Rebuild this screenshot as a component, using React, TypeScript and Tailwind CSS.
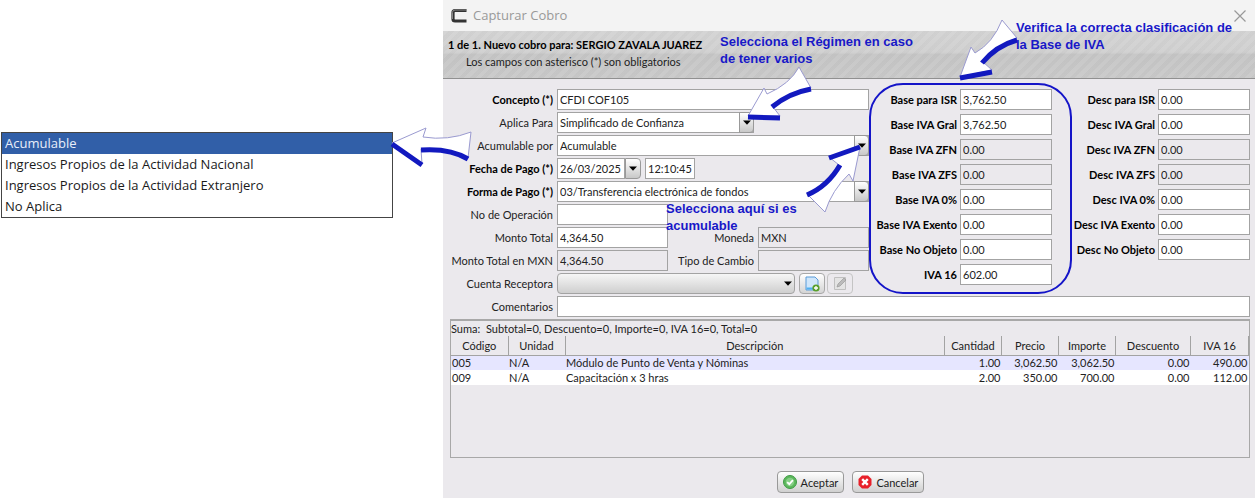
import { useState, type ReactNode } from 'react'

const OPTIONS = [
  'Acumulable',
  'Ingresos Propios de la Actividad Nacional',
  'Ingresos Propios de la Actividad Extranjero',
  'No Aplica',
]

const BASES = [
  { label: 'Base para ISR', value: '3,762.50' },
  { label: 'Base IVA Gral', value: '3,762.50' },
  { label: 'Base IVA ZFN', value: '0.00', readOnly: true },
  { label: 'Base IVA ZFS', value: '0.00', readOnly: true },
  { label: 'Base IVA 0%', value: '0.00' },
  { label: 'Base IVA Exento', value: '0.00' },
  { label: 'Base No Objeto', value: '0.00' },
  { label: 'IVA 16', value: '602.00' },
]

const DESCS = [
  { label: 'Desc para ISR', value: '0.00' },
  { label: 'Desc IVA Gral', value: '0.00' },
  { label: 'Desc IVA ZFN', value: '0.00', readOnly: true },
  { label: 'Desc IVA ZFS', value: '0.00', readOnly: true },
  { label: 'Desc IVA 0%', value: '0.00' },
  { label: 'Desc IVA Exento', value: '0.00' },
  { label: 'Desc No Objeto', value: '0.00' },
]

const COLUMNS = [
  { name: 'Código', width: 'w-[57px]' },
  { name: 'Unidad', width: 'w-[57px]' },
  { name: 'Descripción', width: '' },
  { name: 'Cantidad', width: 'w-[57px]' },
  { name: 'Precio', width: 'w-[57px]' },
  { name: 'Importe', width: 'w-[57px]' },
  { name: 'Descuento', width: 'w-[75px]' },
  { name: 'IVA 16', width: 'w-[58px]' },
]

const ROWS = [
  ['005', 'N/A', 'Módulo de Punto de Venta y Nóminas', '1.00', '3,062.50', '3,062.50', '0.00', '490.00'],
  ['009', 'N/A', 'Capacitación x 3 hras', '2.00', '350.00', '700.00', '0.00', '112.00'],
]

const field = 'h-[21px] min-w-0 border border-[#a3a3a3] px-[2px] text-[#222] outline-none'
const note = 'absolute font-["Liberation_Sans",sans-serif] text-[13px] leading-[17px] font-bold whitespace-nowrap text-[#1818c8]'

function Caret() {
  return (
    <svg viewBox="0 0 8 5" className="h-[5px] w-[8px]" aria-hidden="true">
      <path d="M0 0.5h8L4 4.8z" fill="#000" />
    </svg>
  )
}

function Row({ id, label, bold, children }: { id: string; label: string; bold?: boolean; children: ReactNode }) {
  return (
    <div className="flex items-center gap-1">
      <label htmlFor={id} className={`flex w-[103px] shrink-0 justify-end whitespace-nowrap ${bold ? 'font-bold text-black' : ''}`}>
        {label}
      </label>
      {children}
    </div>
  )
}

function Combo({ id, value, width }: { id: string; value: string; width: string }) {
  return (
    <div className={`relative ${width}`}>
      <select id={id} className={`${field} w-full appearance-none bg-white`} defaultValue={value}>
        <option>{value}</option>
      </select>
      <span className="pointer-events-none absolute inset-y-0 right-0 flex w-[15px] items-center justify-center rounded-r-sm border border-[#999] bg-linear-to-b from-white to-[#c8c8c8]">
        <Caret />
      </span>
    </div>
  )
}

function Amounts({ items, width }: { items: { label: string; value: string; readOnly?: boolean }[]; width: string }) {
  return (
    <div className="flex flex-col gap-1">
      {items.map((item) => {
        const id = item.label.toLowerCase().replace(/\W+/g, '-')
        return (
          <div key={id} className="flex items-center gap-[3px]">
            <label htmlFor={id} className={`${width} flex shrink-0 justify-end font-bold whitespace-nowrap text-black`}>
              {item.label}
            </label>
            <input
              id={id}
              defaultValue={item.value}
              readOnly={item.readOnly}
              className={`${field} w-[92px] ${item.readOnly ? 'bg-[#ebe9ed]' : 'bg-white'}`}
            />
          </div>
        )
      })}
    </div>
  )
}

function Arrow({ className, viewBox, shape, shadow }: { className: string; viewBox: string; shape: string; shadow: string }) {
  return (
    <svg viewBox={viewBox} className={`pointer-events-none absolute ${className}`} aria-hidden="true">
      <path d={shape} fill="#fff" stroke="#9a9ad0" strokeWidth="1" />
      <path d={shadow} fill="none" stroke="#1219bf" strokeWidth="5" />
    </svg>
  )
}

function OptionList() {
  const [selected, setSelected] = useState(0)
  return (
    <ul
      role="listbox"
      aria-label="Acumulable por"
      className='mt-[132px] ml-px mr-[50px] self-start border border-[#444] bg-white font-["Open_Sans",sans-serif] text-[13px]'
    >
      {OPTIONS.map((o, i) => (
        <li
          key={o}
          role="option"
          aria-selected={i === selected}
          onClick={() => setSelected(i)}
          className={`flex h-[21px] items-center px-[3px] ${i === selected ? 'bg-[#315fa8] text-[#e8eefa]' : 'text-[#1a1a1a]'}`}
        >
          {o}
        </li>
      ))}
    </ul>
  )
}

function ItemsTable() {
  return (
    <section className="mt-[2px] ml-[7px] h-[139px] border border-t-2 border-[#a8a8a8]">
      <p className="h-[15px] leading-[15px]">Suma:&nbsp; Subtotal=0, Descuento=0, Importe=0, IVA 16=0, Total=0</p>
      <table className="w-full table-fixed border-collapse">
        <thead>
          <tr>
            {COLUMNS.map((c) => (
              <th key={c.name} className={`${c.width} h-[19px] border-r border-b border-[#a3a3a3] p-0 text-center font-normal`}>
                {c.name}
              </th>
            ))}
          </tr>
        </thead>
        <tbody>
          {ROWS.map((r, i) => (
            <tr key={r[0]} className={i === 0 ? 'bg-[#e6e6ff]' : 'bg-white'}>
              {r.map((cell, j) => (
                <td key={j} className={`h-[15px] px-px py-0 leading-[14px] ${j > 2 ? 'text-right' : 'text-left'}`}>
                  {cell}
                </td>
              ))}
            </tr>
          ))}
        </tbody>
      </table>
    </section>
  )
}

export default function App() {
  return (
    <main className='grid grid-cols-[443fr_812fr] bg-white font-[Lato,sans-serif] text-[11px] leading-[15px] text-[#222]'>
      <OptionList />

      <div className="relative flex min-w-0 flex-col bg-[#ebe9ed]">
        <header className="flex h-[31px] items-center bg-[#f3f3f3] pr-[9px] pl-2">
          <svg viewBox="0 0 16 16" className="h-4 w-4" aria-hidden="true">
            <path d="M15.500 2.500H4Q2 2.500 2 4.500v6.500Q2 13 4 13H15.500" fill="none" stroke="#333" strokeWidth="3.200" />
            <path d="M15 2H4Q1.500 2 1.500 4.500v6.500" fill="none" stroke="#888" strokeWidth="1" />
          </svg>
          <h1 className='ml-[6px] flex-1 font-["Open_Sans",sans-serif] text-[13px] text-[#999]'>Capturar Cobro</h1>
          <button type="button" aria-label="Cerrar">
            <svg viewBox="0 0 12 12" className="h-3 w-3" aria-hidden="true">
              <path d="M0.500 0.500l11 11M11.500 0.500l-11 11" stroke="#999" strokeWidth="1.200" />
            </svg>
          </button>
        </header>

        <div className="h-[48px] border-b border-[#909090] bg-[repeating-linear-gradient(135deg,#ffffff12_0_4px,#00000002_4px_8px),linear-gradient(#d2d2d2,#cfcfcf_45%,#c4c4c4_50%,#c8c8c8)] pt-[5px] pl-[5px]">
          <p className="leading-[17px] font-bold text-black">1 de 1. Nuevo cobro para: SERGIO ZAVALA JUAREZ</p>
          <p className="pl-[18px] leading-[17px]">Los campos con asterisco (*) son obligatorios</p>
        </div>

        <form className="pt-[10px] pr-[5px] pb-[5px]" onSubmit={(e) => e.preventDefault()}>
          <div className="flex">
            <div className="flex min-w-0 flex-1 flex-col gap-[2px] pl-[7px]">
              <Row id="concepto" label="Concepto (*)" bold>
                <input id="concepto" defaultValue="CFDI COF105" className={`${field} flex-1 bg-white`} />
              </Row>
              <Row id="aplica" label="Aplica Para">
                <Combo id="aplica" value="Simplificado de Confianza" width="w-[197px]" />
              </Row>
              <Row id="acumulable" label="Acumulable por">
                <Combo id="acumulable" value="Acumulable" width="flex-1" />
              </Row>
              <Row id="fecha" label="Fecha de Pago (*)" bold>
                <div className="flex">
                  <input id="fecha" defaultValue="26/03/2025" className={`${field} w-[68px] bg-white`} />
                  <button type="button" aria-label="Abrir calendario" className="flex w-4 items-center justify-center rounded-r-sm border border-[#999] bg-linear-to-b from-white to-[#c8c8c8]">
                    <Caret />
                  </button>
                </div>
                <input aria-label="Hora" defaultValue="12:10:45" className={`${field} w-[50px] bg-white`} />
              </Row>
              <Row id="forma" label="Forma de Pago (*)" bold>
                <Combo id="forma" value="03/Transferencia electrónica de fondos" width="flex-1" />
              </Row>
              <Row id="operacion" label="No de Operación">
                <input id="operacion" className={`${field} w-[111px] bg-white`} />
              </Row>
              <Row id="monto" label="Monto Total">
                <input id="monto" defaultValue="4,364.50" className={`${field} w-[111px] bg-white`} />
                <label htmlFor="moneda" className="flex-1 text-right">Moneda</label>
                <input id="moneda" defaultValue="MXN" readOnly className={`${field} w-[111px] bg-[#ebe9ed]`} />
              </Row>
              <Row id="monto-mxn" label="Monto Total en MXN">
                <input id="monto-mxn" defaultValue="4,364.50" readOnly className={`${field} w-[111px] bg-[#ebe9ed]`} />
                <label htmlFor="cambio" className="flex-1 text-right">Tipo de Cambio</label>
                <input id="cambio" readOnly className={`${field} w-[111px] bg-[#ebe9ed]`} />
              </Row>
              <Row id="cuenta" label="Cuenta Receptora">
                <div className="relative w-[238px]">
                  <select id="cuenta" className={`${field} w-full appearance-none rounded-sm bg-linear-to-b from-[#f6f6f6] to-[#cfcfcf]`} />
                  <span className="pointer-events-none absolute inset-y-0 right-[3px] flex items-center">
                    <Caret />
                  </span>
                </div>
                <div className="flex gap-[2px]">
                  <button type="button" aria-label="Nueva cuenta" className="flex h-[21px] w-[26px] items-center justify-center rounded-sm border border-[#a8a8a8] bg-linear-to-b from-white to-[#d4d4d4]">
                    <svg viewBox="0 0 16 16" className="h-4 w-4" aria-hidden="true">
                      <path d="M2 1h9l3 3v10H2z" fill="#cfe6fb" stroke="#5b9bd8" />
                      <path d="M2.500 11.500h10v2h-10z" fill="#4fb0f0" />
                      <circle cx="12" cy="12" r="3.600" fill="#5aa02c" />
                      <path d="M12 10v4M10 12h4" stroke="#fff" strokeWidth="1.300" />
                    </svg>
                  </button>
                  <button type="button" aria-label="Editar cuenta" disabled className="flex h-[21px] w-[26px] items-center justify-center rounded-sm border border-[#c4c4c4]">
                    <svg viewBox="0 0 16 16" className="h-4 w-4" aria-hidden="true">
                      <path d="M2.500 1.500h11v12h-11z" fill="#e4e4e4" stroke="#c0c0c0" />
                      <path d="M5 11l1-3 6-6 2 2-6 6z" fill="#bbb" stroke="#999" strokeWidth="0.700" />
                    </svg>
                  </button>
                </div>
              </Row>
            </div>

            <div className="relative">
              <Amounts items={BASES} width="w-[88px]" />
              <div className="pointer-events-none absolute -top-[6px] right-[-20px] bottom-0 left-0 rounded-[34px] border-[2px] border-[#1414c8]" />
            </div>
            <Amounts items={DESCS} width="w-[103px]" />
          </div>

          <div className="mt-[2px] pl-[7px]">
            <Row id="comentarios" label="Comentarios">
              <input id="comentarios" className={`${field} flex-1 bg-white`} />
            </Row>
          </div>

          <ItemsTable />

          <div className="mt-[13px] flex justify-center gap-2 pl-2">
            <button type="submit" className="flex h-[22px] items-center gap-1 rounded-sm border border-[#999] bg-linear-to-b from-white to-[#d0d0d0] px-[5px]">
              <svg viewBox="0 0 14 14" className="h-[14px] w-[14px]" aria-hidden="true">
                <circle cx="7" cy="7" r="6.500" fill="#5cb85c" stroke="#3f9a45" />
                <circle cx="7" cy="7" r="4.200" fill="#86cf86" />
                <path d="M4.200 7.200l2.100 2 3.600-4" fill="none" stroke="#fff" strokeWidth="1.800" />
              </svg>
              Aceptar
            </button>
            <button type="button" className="flex h-[22px] items-center gap-1 rounded-sm border border-[#999] bg-linear-to-b from-white to-[#d0d0d0] px-[5px]">
              <svg viewBox="0 0 14 14" className="h-[14px] w-[14px]" aria-hidden="true">
                <path d="M4 0.500h6L13.500 4v6L10 13.500H4L0.500 10V4z" fill="#e8202a" />
                <path d="M4.200 4.200l5.600 5.600M9.800 4.200L4.200 9.800" stroke="#fff" strokeWidth="2.400" />
              </svg>
              Cancelar
            </button>
          </div>
        </form>

        <Arrow
          className="top-[62px] left-[300px] h-[62px] w-[75px]"
          viewBox="743 62 75 62"
          shape="M748 116L764 88L767 94Q790 84 799 67L811 88Q790 94 773 107L780 116Z"
          shadow="M811 89Q789 93 772 107M748 117L780 118"
        />
        <Arrow
          className="top-[15px] left-[512px] h-[68px] w-[68px]"
          viewBox="955 15 68 68"
          shape="M960 77L971 47L975 53Q993 43 1002 20L1017 38Q999 44 983 62L992 70Z"
          shadow="M1017 40Q996 46 982 63M960 78L992 72"
        />
        <Arrow
          className="top-[122px] left-[-54px] h-[48px] w-[88px]"
          viewBox="389 122 88 48"
          shape="M392 143L426 128L423 137Q448 141 471 132L468 158Q448 148 421 149L422 164Z"
          shadow="M392 144L422 165M421 150Q450 148 468 159"
        />
        <Arrow
          className="top-[142px] left-[359px] h-[74px] w-[66px]"
          viewBox="802 142 66 74"
          shape="M860 147L829 157L839 165Q828 184 807 194L825 212Q832 190 849 174L853 181Z"
          shadow="M829 158L860 147M840 165Q828 186 807 195"
        />

        <p className={`${note} top-[33px] left-[277px]`}>
          Selecciona el Régimen en caso
          <br />
          de tener varios
        </p>
        <p className={`${note} top-[19px] left-[573px]`}>
          Verifica la correcta clasificación de
          <br />
          la Base de IVA
        </p>
        <p className={`${note} top-[200px] left-[223px]`}>
          Selecciona aquí si es
          <br />
          acumulable
        </p>
      </div>
    </main>
  )
}
